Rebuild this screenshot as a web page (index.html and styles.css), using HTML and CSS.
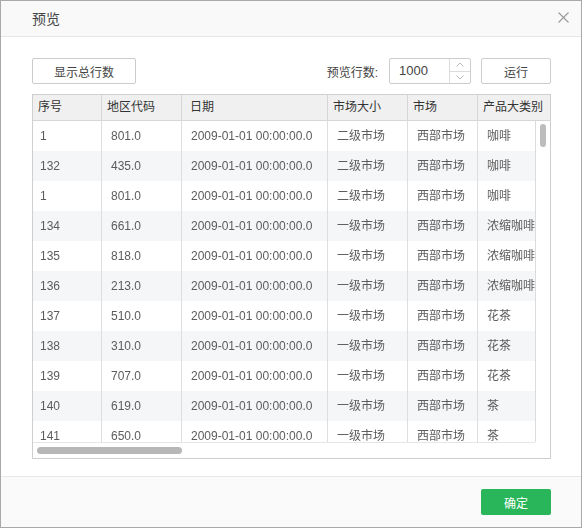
FILE: index.html
```html
<!DOCTYPE html>
<html lang="zh-CN">
<head>
<meta charset="utf-8">
<title>预览</title>
<link rel="stylesheet" href="styles.css">
</head>
<body>
<div class="dialog">
  <div class="dlg-head">
    <span class="dlg-title">预览</span>
    <span class="dlg-close"><svg width="11" height="11" viewBox="0 0 11 11"><path d="M0.5 0.5L10.5 10.5M10.5 0.5L0.5 10.5" stroke="#9a9a9a" stroke-width="1.1" fill="none"/></svg></span>
  </div>
  <div class="dlg-body">
    <div class="toolbar">
      <button class="btn btn-total">显示总行数</button>
      <div class="tool-right">
        <span class="lbl">预览行数:</span>
        <div class="numinput">
          <span class="num-val">1000</span>
          <div class="spin">
            <span class="spin-btn"><svg width="8" height="5" viewBox="0 0 8 5"><path d="M0.5 4.5L4 1L7.5 4.5" stroke="#b8b8b8" fill="none"/></svg></span>
            <span class="spin-btn spin-down"><svg width="8" height="5" viewBox="0 0 8 5"><path d="M0.5 0.5L4 4L7.5 0.5" stroke="#b8b8b8" fill="none"/></svg></span>
          </div>
        </div>
        <button class="btn btn-run">运行</button>
      </div>
    </div>
    <div class="grid">
      <div class="thead">
        <div class="th c1">序号</div>
        <div class="th c2">地区代码</div>
        <div class="th c3">日期</div>
        <div class="th c4">市场大小</div>
        <div class="th c5">市场</div>
        <div class="th c6h">产品大类别</div>
      </div>
      <div class="tbody-area">
        <div class="viewport">
          <div class="row"><div class="td c1">1</div><div class="td c2">801.0</div><div class="td c3">2009-01-01 00:00:00.0</div><div class="td c4">二级市场</div><div class="td c5">西部市场</div><div class="td c6">咖啡</div></div>
          <div class="row alt"><div class="td c1">132</div><div class="td c2">435.0</div><div class="td c3">2009-01-01 00:00:00.0</div><div class="td c4">二级市场</div><div class="td c5">西部市场</div><div class="td c6">咖啡</div></div>
          <div class="row"><div class="td c1">1</div><div class="td c2">801.0</div><div class="td c3">2009-01-01 00:00:00.0</div><div class="td c4">二级市场</div><div class="td c5">西部市场</div><div class="td c6">咖啡</div></div>
          <div class="row alt"><div class="td c1">134</div><div class="td c2">661.0</div><div class="td c3">2009-01-01 00:00:00.0</div><div class="td c4">一级市场</div><div class="td c5">西部市场</div><div class="td c6">浓缩咖啡</div></div>
          <div class="row"><div class="td c1">135</div><div class="td c2">818.0</div><div class="td c3">2009-01-01 00:00:00.0</div><div class="td c4">一级市场</div><div class="td c5">西部市场</div><div class="td c6">浓缩咖啡</div></div>
          <div class="row alt"><div class="td c1">136</div><div class="td c2">213.0</div><div class="td c3">2009-01-01 00:00:00.0</div><div class="td c4">一级市场</div><div class="td c5">西部市场</div><div class="td c6">浓缩咖啡</div></div>
          <div class="row"><div class="td c1">137</div><div class="td c2">510.0</div><div class="td c3">2009-01-01 00:00:00.0</div><div class="td c4">一级市场</div><div class="td c5">西部市场</div><div class="td c6">花茶</div></div>
          <div class="row alt"><div class="td c1">138</div><div class="td c2">310.0</div><div class="td c3">2009-01-01 00:00:00.0</div><div class="td c4">一级市场</div><div class="td c5">西部市场</div><div class="td c6">花茶</div></div>
          <div class="row"><div class="td c1">139</div><div class="td c2">707.0</div><div class="td c3">2009-01-01 00:00:00.0</div><div class="td c4">一级市场</div><div class="td c5">西部市场</div><div class="td c6">花茶</div></div>
          <div class="row alt"><div class="td c1">140</div><div class="td c2">619.0</div><div class="td c3">2009-01-01 00:00:00.0</div><div class="td c4">一级市场</div><div class="td c5">西部市场</div><div class="td c6">茶</div></div>
          <div class="row"><div class="td c1">141</div><div class="td c2">650.0</div><div class="td c3">2009-01-01 00:00:00.0</div><div class="td c4">一级市场</div><div class="td c5">西部市场</div><div class="td c6">茶</div></div>
        </div>
        <div class="vscroll"><div class="vthumb"></div></div>
      </div>
      <div class="hscroll">
        <div class="htrack"><div class="hthumb"></div></div>
        <div class="corner"></div>
      </div>
    </div>
  </div>
  <div class="dlg-foot">
    <button class="btn-ok">确定</button>
  </div>
</div>
</body>
</html>
```
FILE: styles.css
```css
* { box-sizing: border-box; }
html, body { margin: 0; padding: 0; background: #fff; }
body {
  font-family: "Liberation Sans", "Noto Sans CJK SC", sans-serif;
  font-size: 12px;
  color: #333;
}
.dialog {
  width: 582px;
  height: 528px;
  border: 1px solid #a9a9a9;
  display: flex;
  flex-direction: column;
  background: #fff;
}
.dlg-head {
  height: 36px;
  flex: none;
  background: #f9f9f9;
  border-bottom: 1px solid #e6e6e6;
  display: flex;
  align-items: center;
  justify-content: space-between;
  padding: 0 12px 0 31px;
}
.dlg-title { font-size: 14px; color: #444; padding-bottom: 2px; }
.dlg-close { display: flex; width: 11px; height: 11px; margin-bottom: 2px; }
.dlg-body {
  flex: 1;
  padding: 21px 30px 0 31px;
  display: flex;
  flex-direction: column;
}
.toolbar {
  height: 26px;
  display: flex;
  justify-content: space-between;
  align-items: center;
  margin-bottom: 10px;
}
.btn {
  height: 26px;
  border: 1px solid #cccccc;
  border-radius: 2px;
  background: #fff;
  font-family: inherit;
  font-size: 12px;
  color: #444;
  padding: 0;
}
.btn-total { width: 104px; }
.btn-run { width: 70px; margin-left: 10px; }
.tool-right { display: flex; align-items: center; }
.lbl { color: #444; margin-right: 11px; }
.numinput {
  width: 82px;
  height: 26px;
  border: 1px solid #cccccc;
  border-radius: 2px;
  display: flex;
}
.num-val { flex: 1; padding-left: 9px; line-height: 24px; font-size: 13px; color: #444; }
.spin {
  width: 21px;
  border-left: 1px solid #dcdcdc;
  display: flex;
  flex-direction: column;
}
.spin-btn { flex: 1; display: flex; align-items: center; justify-content: center; }
.spin-down { border-top: 1px solid #dcdcdc; }
.grid {
  width: 519px;
  height: 365px;
  border: 1px solid #cfcfcf;
  display: flex;
  flex-direction: column;
}
.thead {
  height: 26px;
  flex: none;
  display: flex;
  background: #f0f0f0;
  border-bottom: 1px solid #d6d6d6;
}
.th {
  line-height: 25px;
  padding-left: 5px;
  color: #333;
  border-right: 1px solid #d6d6d6;
  white-space: nowrap;
  overflow: hidden;
  flex: none;
}
.c1 { width: 69px; }
.c2 { width: 80px; }
.c3 { width: 146px; }
.c4 { width: 80px; }
.c5 { width: 70px; }
.c6 { width: 220px; }
.c6h { flex: 1; border-right: none; }
.th.c3 { padding-left: 8px; }
.tbody-area { flex: none; height: 321px; display: flex; }
.viewport { flex: 1; overflow: hidden; will-change: transform; }
.row { display: flex; height: 30px; width: 1700px; background: #fff; }
.row.alt { background: #f5f6f8; }
.td {
  flex: none;
  line-height: 30px;
  padding-left: 9px;
  color: #5c5c5c;
  border-right: 1px solid #dedede;
  white-space: nowrap;
  overflow: hidden;
}
.td.c1 { padding-left: 7px; }
.vscroll {
  width: 15px;
  flex: none;
  border-left: 1px solid #dcdcdc;
  background: #fff;
  padding: 3px 0 0 4px;
}
.vthumb { width: 6px; height: 23px; border-radius: 3px; background: #bdbdbd; }
.hscroll { flex: 1; display: flex; }
.htrack {
  flex: 1;
  border-top: 1px solid #e6e6e6;
  padding: 4px 0 0 4px;
}
.hthumb { width: 145px; height: 7px; border-radius: 4px; background: #b7b7b7; }
.corner { width: 15px; }
.dlg-foot {
  height: 51px;
  flex: none;
  background: #fafafa;
  border-top: 1px solid #e8e8e8;
  display: flex;
  justify-content: flex-end;
  padding: 12px 30px 0 0;
}
.btn-ok {
  width: 70px;
  height: 26px;
  border: none;
  border-radius: 2px;
  background: #29b65a;
  color: #fff;
  font-family: inherit;
  font-size: 12px;
  padding: 0;
}
```
